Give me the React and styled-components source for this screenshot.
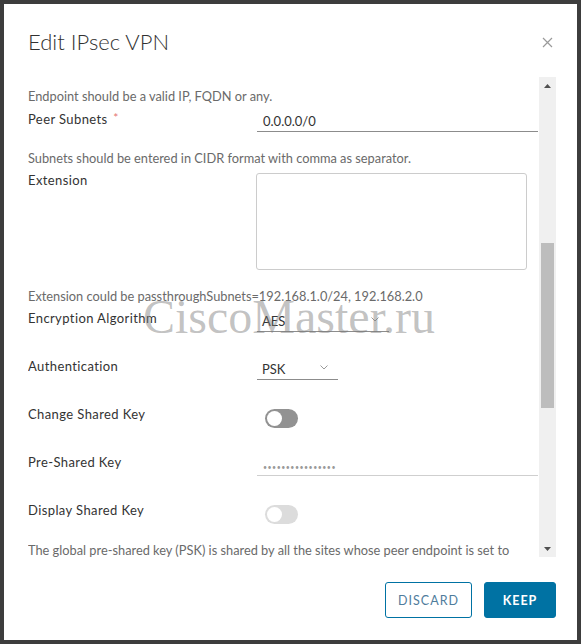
import React from "react";
import styled, { createGlobalStyle } from "styled-components";

const GlobalStyle = createGlobalStyle`
  html, body {
    margin: 0;
    padding: 0;
    background: #3d3d3d;
  }
  * {
    box-sizing: border-box;
  }
`;

export default function App() {
  return (
    <>
      <GlobalStyle />
      <Frame>
        <Modal>
          <Header>
            <Title>Edit IPsec VPN</Title>
            <CloseButton aria-label="close">
              <svg width="11" height="11" viewBox="0 0 11 11">
                <path d="M1 1L10 10M10 1L1 10" stroke="#9a9a9a" strokeWidth="1.2" fill="none" />
              </svg>
            </CloseButton>
          </Header>

          <Body>
            <Content>
              <Hint $first>Endpoint should be a valid IP, FQDN or any.</Hint>

              <Field $after>
                <Label>
                  Peer Subnets <Required>*</Required>
                </Label>
                <TextInput>0.0.0.0/0</TextInput>
              </Field>
              <Hint>Subnets should be entered in CIDR format with comma as separator.</Hint>

              <Field $after>
                <Label>Extension</Label>
                <TextArea />
              </Field>
              <Hint>Extension could be passthroughSubnets=192.168.1.0/24, 192.168.2.0</Hint>

              <Field $after>
                <Label>Encryption Algorithm</Label>
                <Select $width={132}>
                  <span>AES</span>
                  <Chevron />
                </Select>
              </Field>

              <Field>
                <Label>Authentication</Label>
                <Select $width={81}>
                  <span>PSK</span>
                  <Chevron />
                </Select>
              </Field>

              <Field>
                <Label>Change Shared Key</Label>
                <Toggle />
              </Field>

              <Field>
                <Label>Pre-Shared Key</Label>
                <TextInput $light>
                  <Dots>••••••••••••••••</Dots>
                </TextInput>
              </Field>

              <Field>
                <Label>Display Shared Key</Label>
                <Toggle $disabled />
              </Field>
              <Hint>
                The global pre-shared key (PSK) is shared by all the sites whose peer endpoint is set to
              </Hint>

              <Watermark>CiscoMaster.ru</Watermark>
            </Content>

            <ScrollTrack>
              <Arrow>
                <svg width="7" height="4" viewBox="0 0 7 4">
                  <path d="M0 4L3.5 0L7 4Z" fill="#505050" />
                </svg>
              </Arrow>
              <Thumb />
              <Arrow $bottom>
                <svg width="7" height="4" viewBox="0 0 7 4">
                  <path d="M0 0L3.5 4L7 0Z" fill="#505050" />
                </svg>
              </Arrow>
            </ScrollTrack>
          </Body>

          <Footer>
            <Button $outline>DISCARD</Button>
            <Button>KEEP</Button>
          </Footer>
        </Modal>
      </Frame>
    </>
  );
}

function Chevron() {
  return (
    <ChevronIcon width="8" height="5" viewBox="0 0 8 5">
      <path d="M0.5 0.5L4 4L7.5 0.5" stroke="#9a9a9a" strokeWidth="1" fill="none" />
    </ChevronIcon>
  );
}

function Toggle({ $disabled }) {
  return (
    <ToggleTrack $disabled={$disabled}>
      <ToggleKnob />
    </ToggleTrack>
  );
}

const Frame = styled.div`
  width: 581px;
  height: 644px;
  padding: 4px;
  background: #3d3d3d;
`;

const Modal = styled.div`
  width: 100%;
  height: 100%;
  background: #fff;
  display: flex;
  flex-direction: column;
  font-family: Lato, "Liberation Sans", sans-serif;
  color: #333;
`;

const Header = styled.div`
  height: 73px;
  display: flex;
  align-items: flex-start;
  justify-content: space-between;
  padding: 24px 24px 0 24px;
`;

const Title = styled.h3`
  margin: 0;
  font-size: 22px;
  line-height: 28px;
  font-weight: 300;
  color: #313131;
`;

const CloseButton = styled.div`
  margin-top: 9px;
  width: 11px;
  height: 11px;
  display: flex;
`;

const Body = styled.div`
  height: 480px;
  display: flex;
  padding-left: 24px;
  padding-right: 21px;
  overflow: hidden;
`;

const Content = styled.div`
  position: relative;
  flex: 1;
  overflow: hidden;
`;

const Hint = styled.div`
  margin-top: ${(p) => (p.$first ? "11px" : "18px")};
  font-size: 12.8px;
  line-height: 16px;
  color: #6a6a6a;
  white-space: nowrap;
`;

const Field = styled.div`
  display: flex;
  align-items: flex-start;
  margin-top: ${(p) => (p.$after ? "2px" : "22px")};
`;

const Label = styled.div`
  width: 228px;
  flex: none;
  font-size: 13px;
  line-height: 24px;
  color: #333;
  letter-spacing: 0.4px;
`;

const Required = styled.span`
  color: #e57373;
  font-size: 12px;
  margin-left: 2px;
  vertical-align: 2px;
`;

const TextInput = styled.div`
  flex: 1;
  height: 26px;
  padding: 7px 0 0 6px;
  margin-left: 1px;
  font-size: 13px;
  line-height: 16px;
  color: #333;
  border-bottom: 1px solid ${(p) => (p.$light ? "#cfcfcf" : "#8c8c8c")};
`;

const Dots = styled.span`
  font-size: 7px;
  letter-spacing: 0.5px;
  color: #9a9a9a;
`;

const TextArea = styled.div`
  margin-top: 5px;
  width: 271px;
  height: 97px;
  border: 1px solid #ccc;
  border-radius: 3px;
`;

const Select = styled.div`
  width: ${(p) => p.$width}px;
  height: 26px;
  margin-left: 1px;
  display: flex;
  justify-content: space-between;
  align-items: center;
  padding: 4px 10px 0 5px;
  font-size: 13px;
  color: #333;
  border-bottom: 1px solid #8c8c8c;
`;

const ChevronIcon = styled.svg`
  flex: none;
  margin-bottom: 3px;
`;

const ToggleTrack = styled.div`
  margin-top: 7px;
  margin-left: 9px;
  width: 33px;
  height: 19px;
  border-radius: 10px;
  background: ${(p) => (p.$disabled ? "#dcdcdc" : "#929292")};
  display: flex;
  align-items: center;
  padding-left: 2px;
`;

const ToggleKnob = styled.div`
  width: 15px;
  height: 15px;
  border-radius: 50%;
  background: #fff;
`;

const Watermark = styled.div`
  position: absolute;
  left: 115px;
  top: 214px;
  font-family: "Liberation Serif", serif;
  font-size: 48px;
  line-height: 52px;
  color: rgba(120, 120, 120, 0.45);
  white-space: nowrap;
  pointer-events: none;
`;

const ScrollTrack = styled.div`
  width: 17px;
  flex: none;
  margin-left: 1px;
  background: #f0f0f0;
  display: flex;
  flex-direction: column;
  align-items: center;
  padding: 0 2px;
`;

const Arrow = styled.div`
  height: 17px;
  width: 100%;
  display: flex;
  align-items: center;
  justify-content: center;
  margin-top: ${(p) => (p.$bottom ? "auto" : "0")};
`;

const Thumb = styled.div`
  width: 13px;
  height: 165px;
  margin-top: 149px;
  background: #bdbdbd;
`;

const Footer = styled.div`
  flex: 1;
  display: flex;
  justify-content: flex-end;
  align-items: flex-start;
  gap: 12px;
  padding: 25px 21px 0 0;
`;

const Button = styled.button`
  height: 36px;
  width: ${(p) => (p.$outline ? "87px" : "72px")};
  padding: 0;
  border-radius: 3px;
  border: 1px solid #0072a3;
  background: ${(p) => (p.$outline ? "#fff" : "#0072a3")};
  color: ${(p) => (p.$outline ? "#4f7c9c" : "#fff")};
  font-family: Lato, "Liberation Sans", sans-serif;
  font-size: 12.5px;
  font-weight: ${(p) => (p.$outline ? 400 : 700)};
  letter-spacing: 1px;
`;
